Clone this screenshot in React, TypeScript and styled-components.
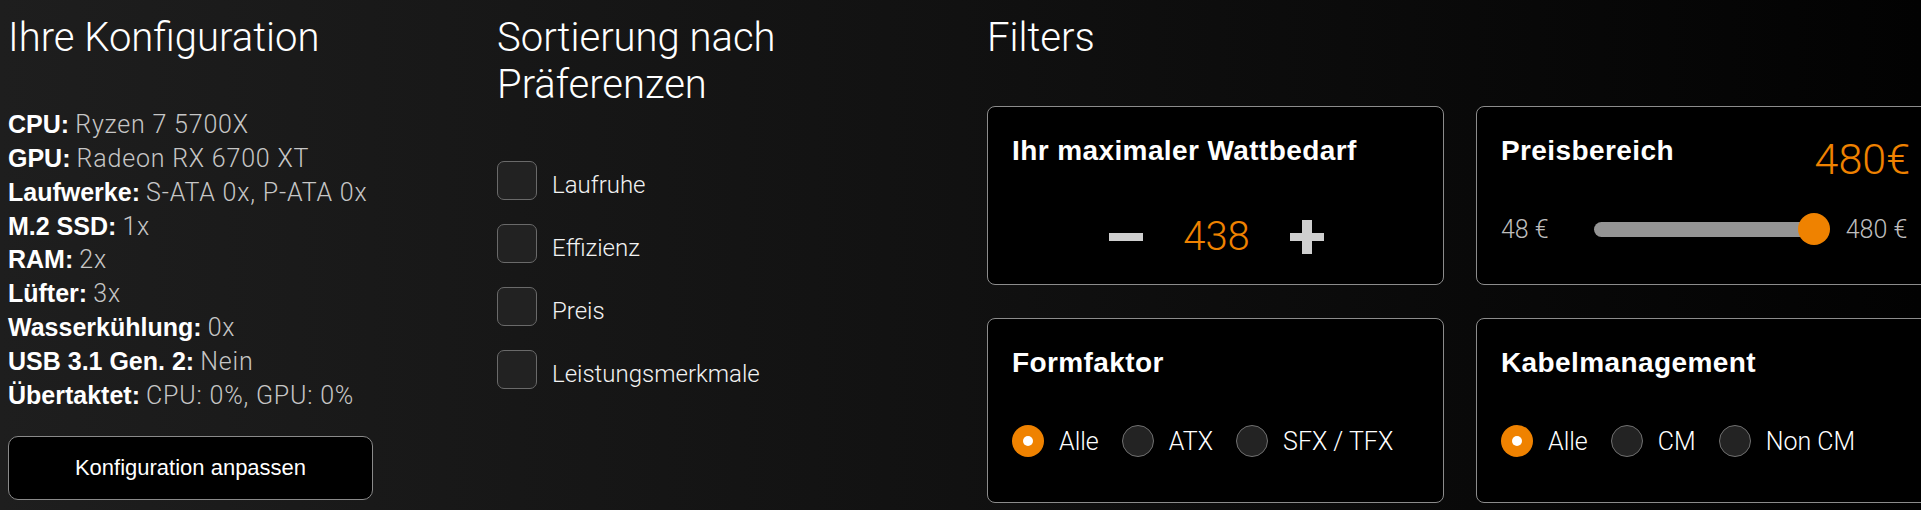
import React from "react"
import styled, { createGlobalStyle } from 'styled-components'

const GlobalStyle = createGlobalStyle`
html, body {
    margin: 0;
    padding: 0;
    background: #000;
}
* {
    box-sizing: border-box;
}
`

const light = `Roboto, "Liberation Sans", Arial, sans-serif`
const bold = `"Liberation Sans", Arial, sans-serif`
const orange = '#ef8200'

const specs: [string, string][] = [
    ['CPU:', 'Ryzen 7 5700X'],
    ['GPU:', 'Radeon RX 6700 XT'],
    ['Laufwerke:', 'S-ATA 0x, P-ATA 0x'],
    ['M.2 SSD:', '1x'],
    ['RAM:', '2x'],
    ['Lüfter:', '3x'],
    ['Wasserkühlung:', '0x'],
    ['USB 3.1 Gen. 2:', 'Nein'],
    ['Übertaktet:', 'CPU: 0%, GPU: 0%'],
]

const prefs = ['Laufruhe', 'Effizienz', 'Preis', 'Leistungsmerkmale']

const MinusIcon = () => (
    <svg width="34" height="34" viewBox="0 0 34 34">
        <rect x="0" y="13" width="34" height="8" fill="#cfcfcf" />
    </svg>
)

const PlusIcon = () => (
    <svg width="34" height="34" viewBox="0 0 34 34">
        <rect x="0" y="13" width="34" height="8" fill="#cfcfcf" />
        <rect x="12" y="0" width="10" height="34" fill="#cfcfcf" />
    </svg>
)

const RadioGroup: React.FC<{ options: string[]; selected: number }> = ({ options, selected }) => (
    <Radios>
        {options.map((o, i) => (
            <RadioItem key={o}>
                <RadioDot $checked={i === selected} />
                <RadioLabel>{o}</RadioLabel>
            </RadioItem>
        ))}
    </Radios>
)

const App: React.FC = () => (
    <Page>
        <GlobalStyle />
        <ConfigColumn>
            <Heading>Ihre Konfiguration</Heading>
            <SpecList>
                {specs.map(([k, v]) => (
                    <SpecRow key={k}>
                        <b>{k}</b> <SpecValue>{v}</SpecValue>
                    </SpecRow>
                ))}
            </SpecList>
            <EditButton>Konfiguration anpassen</EditButton>
        </ConfigColumn>

        <SortColumn>
            <Heading $narrow>Sortierung nach Präferenzen</Heading>
            <Checks>
                {prefs.map(p => (
                    <CheckRow key={p}>
                        <CheckBox />
                        <CheckLabel>{p}</CheckLabel>
                    </CheckRow>
                ))}
            </Checks>
        </SortColumn>

        <FilterColumn>
            <Heading>Filters</Heading>
            <CardGrid>
                <Card>
                    <CardTitle>Ihr maximaler Wattbedarf</CardTitle>
                    <Counter>
                        <MinusIcon />
                        <CounterValue>438</CounterValue>
                        <PlusIcon />
                    </Counter>
                </Card>
                <Card>
                    <CardHeader>
                        <CardTitle>Preisbereich</CardTitle>
                        <PriceValue>480€</PriceValue>
                    </CardHeader>
                    <SliderRow>
                        <SliderLabel>48 €</SliderLabel>
                        <Track>
                            <Thumb />
                        </Track>
                        <SliderLabel>480 €</SliderLabel>
                    </SliderRow>
                </Card>
                <Card>
                    <CardTitle>Formfaktor</CardTitle>
                    <RadioGroup options={['Alle', 'ATX', 'SFX / TFX']} selected={0} />
                </Card>
                <Card>
                    <CardTitle>Kabelmanagement</CardTitle>
                    <RadioGroup options={['Alle', 'CM', 'Non CM']} selected={0} />
                </Card>
            </CardGrid>
        </FilterColumn>
    </Page>
)

const Page = styled.div`
display: flex;
width: 100%;
height: 100vh;
overflow: hidden;
padding-top: 14px;
color: #fff;
font-family: ${light};
background: linear-gradient(90deg, #1e1e1e 0%, #111 50%, #020202 100%);
`

const ConfigColumn = styled.div`
flex: 0 0 497px;
padding-left: 8px;
`

const SortColumn = styled.div`
flex: 0 0 490px;
`

const FilterColumn = styled.div`
flex: 0 0 auto;
`

const Heading = styled.h1<{ $narrow?: boolean }>`
margin: 0;
font-size: 40px;
line-height: 47px;
font-weight: 300;
color: #fff;
max-width: ${p => p.$narrow ? '380px' : 'none'};
`

const SpecList = styled.div`
margin-top: 47px;
font-size: 25px;
font-weight: 300;
b {
    font-family: ${bold};
    font-weight: 700;
    color: #fff;
}
`

const SpecRow = styled.div`
height: 33.85px;
line-height: 33.85px;
white-space: nowrap;
`

const SpecValue = styled.span`
color: #c6c6c6;
letter-spacing: 0.8px;
`

const EditButton = styled.button`
display: block;
margin-top: 23px;
width: 365px;
height: 64px;
background: #000;
border: 1px solid #8a8a8a;
border-radius: 10px;
color: #fff;
font-family: ${bold};
font-size: 22px;
cursor: pointer;
`

const Checks = styled.div`
margin-top: 53px;
display: flex;
flex-direction: column;
gap: 24px;
`

const CheckRow = styled.label`
display: flex;
align-items: center;
gap: 15px;
`

const CheckBox = styled.span`
width: 40px;
height: 39px;
border: 1.5px solid #6a6a6a;
border-radius: 7px;
background: #222;
`

const CheckLabel = styled.span`
font-size: 24px;
font-weight: 300;
color: #f2f2f2;
padding-top: 8px;
`

const CardGrid = styled.div`
margin-top: 45px;
display: grid;
grid-template-columns: 457px 457px;
grid-template-rows: 179px 185px;
column-gap: 32px;
row-gap: 33px;
`

const Card = styled.div`
background: #000;
border: 1px solid #8c8c8c;
border-radius: 8px;
padding: 28px 22px 0 24px;
`

const CardHeader = styled.div`
display: flex;
justify-content: space-between;
align-items: flex-start;
`

const CardTitle = styled.h2`
margin: 0;
font-family: ${bold};
font-size: 28px;
line-height: 32px;
letter-spacing: 0.4px;
font-weight: 700;
color: #fff;
`

const Counter = styled.div`
margin-top: 46px;
display: flex;
justify-content: center;
align-items: center;
gap: 40px;
`

const CounterValue = styled.span`
font-size: 40px;
line-height: 48px;
font-weight: 300;
color: ${orange};
`

const PriceValue = styled.span`
font-size: 43px;
line-height: 48px;
font-weight: 300;
color: ${orange};
`

const SliderRow = styled.div`
margin-top: 30px;
height: 32px;
display: flex;
align-items: center;
`

const SliderLabel = styled.span`
font-size: 25px;
font-weight: 300;
color: #bdbdbd;
white-space: nowrap;
`

const Track = styled.div`
position: relative;
width: 225px;
height: 15px;
margin: 0 27px 0 45px;
border-radius: 8px;
background: #949494;
`

const Thumb = styled.span`
position: absolute;
right: -11px;
top: 50%;
width: 32px;
height: 32px;
margin-top: -16px;
border-radius: 50%;
background: ${orange};
`

const Radios = styled.div`
margin-top: 46px;
display: flex;
align-items: center;
gap: 23px;
`

const RadioItem = styled.label`
display: flex;
align-items: center;
gap: 15px;
`

const RadioDot = styled.span<{ $checked: boolean }>`
position: relative;
width: 32px;
height: 32px;
border-radius: 50%;
background: ${p => p.$checked ? orange : '#232323'};
border: ${p => p.$checked ? 'none' : '1.5px solid #707070'};
&::after {
    content: '';
    display: ${p => p.$checked ? 'block' : 'none'};
    position: absolute;
    left: 11px;
    top: 11px;
    width: 10px;
    height: 10px;
    border-radius: 50%;
    background: #fff;
}
`

const RadioLabel = styled.span`
font-size: 25px;
font-weight: 300;
color: #fff;
`

export default App
